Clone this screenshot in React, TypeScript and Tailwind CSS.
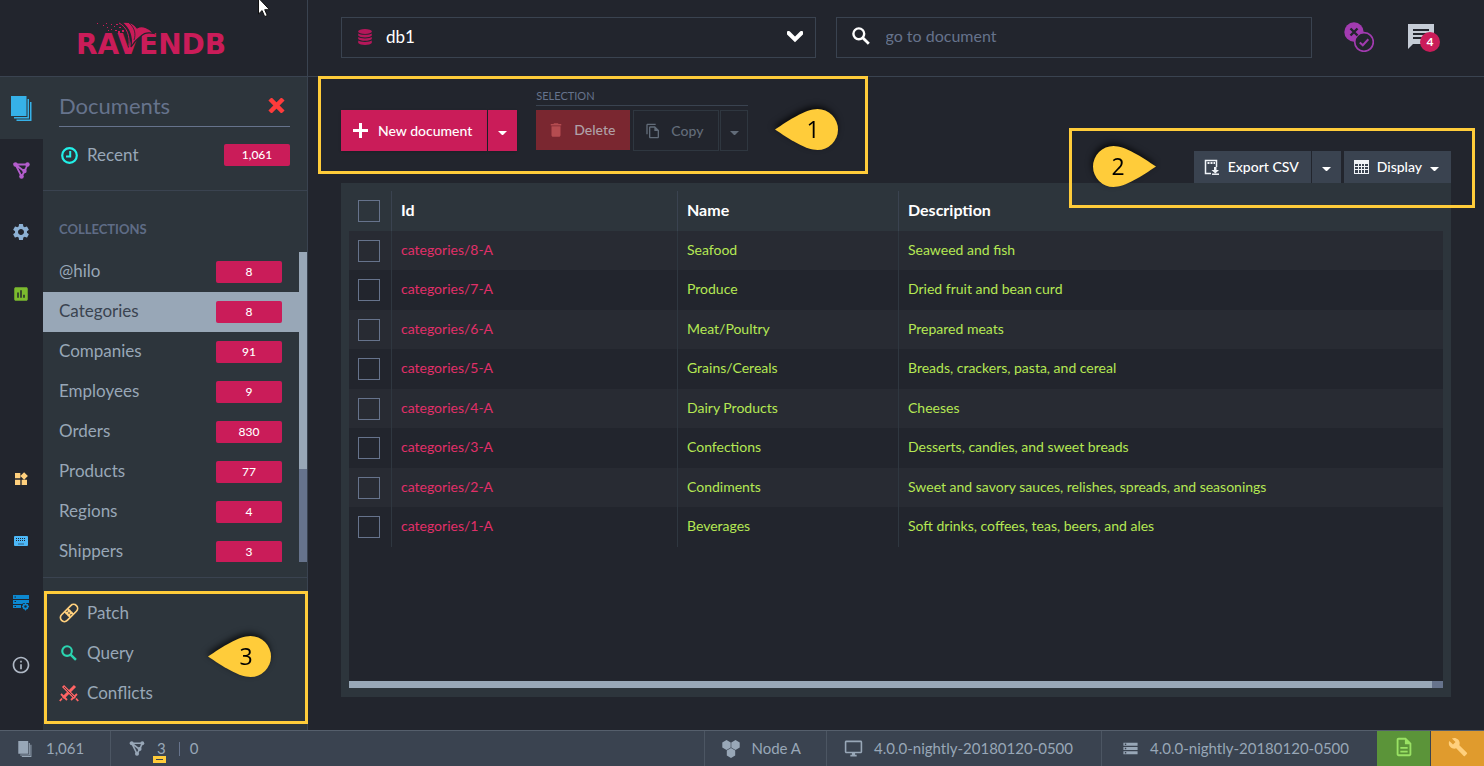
import type { ReactNode } from 'react';
import {
    MdBuild,
    MdDelete,
    MdInfoOutline,
    MdInsertChart,
    MdOutlineDescription,
    MdOutlineDesktopWindows,
    MdOutlineFileCopy,
    MdSettings,
    MdStorage,
    MdWidgets,
} from 'react-icons/md';

interface Collection {
    name: string;
    count: number;
}

interface Category {
    id: string;
    name: string;
    description: string;
}

const collections: Collection[] = [
    { name: '@hilo', count: 8 },
    { name: 'Categories', count: 8 },
    { name: 'Companies', count: 91 },
    { name: 'Employees', count: 9 },
    { name: 'Orders', count: 830 },
    { name: 'Products', count: 77 },
    { name: 'Regions', count: 4 },
    { name: 'Shippers', count: 3 },
];

const categories: Category[] = [
    { id: 'categories/8-A', name: 'Seafood', description: 'Seaweed and fish' },
    { id: 'categories/7-A', name: 'Produce', description: 'Dried fruit and bean curd' },
    { id: 'categories/6-A', name: 'Meat/Poultry', description: 'Prepared meats' },
    { id: 'categories/5-A', name: 'Grains/Cereals', description: 'Breads, crackers, pasta, and cereal' },
    { id: 'categories/4-A', name: 'Dairy Products', description: 'Cheeses' },
    { id: 'categories/3-A', name: 'Confections', description: 'Desserts, candies, and sweet breads' },
    {
        id: 'categories/2-A',
        name: 'Condiments',
        description: 'Sweet and savory sauces, relishes, spreads, and seasonings',
    },
    { id: 'categories/1-A', name: 'Beverages', description: 'Soft drinks, coffees, teas, beers, and ales' },
];

export default function App() {
    return (
        <div className="relative flex h-screen flex-col overflow-hidden bg-[#22252d] font-['Lato',sans-serif] text-[#98a7b7]">
            <Header />
            <div className="flex min-h-0 flex-1">
                <Rail />
                <Sidebar />
                <Documents />
            </div>
            <Footer />
            <svg className="absolute top-0 left-[258px] h-[18px] w-3" viewBox="0 0 12 18">
                <path d="M.5-2V14l3.600-3.400 2.600 6 2.600-1.100L6.700 9.700H11.500Z" fill="#fff" stroke="#111" />
            </svg>
        </div>
    );
}

function Header() {
    return (
        <header className="flex h-[77px] shrink-0 border-b border-[#3a4350]">
            <div className="flex w-[308px] shrink-0 items-center justify-center border-r border-[#3a4350]">
                <Logo />
            </div>
            <div className="flex flex-1 items-center gap-5 pr-[46px] pb-[2px] pl-[33px]">
                <label className="flex h-[41px] flex-1 items-center border border-[#3a4350] pr-3 pb-px pl-4">
                    <DatabaseIcon />
                    <select
                        aria-label="Database"
                        className="ml-[14px] flex-1 appearance-none bg-transparent text-[17px] text-white outline-none"
                    >
                        <option>db1</option>
                    </select>
                    <svg className="h-3 w-4" viewBox="0 0 16 12" fill="none" stroke="#fff" strokeWidth="4">
                        <path d="M1.500 2 8 8.500 14.500 2" strokeLinecap="round" />
                    </svg>
                </label>
                <label className="flex h-[41px] flex-1 items-center border border-[#3a4350] px-[15px] pb-[2px]">
                    <SearchIcon className="h-[18px] w-[18px] text-white" />
                    <input
                        type="text"
                        aria-label="go to document"
                        placeholder="go to document"
                        className="ml-4 flex-1 bg-transparent text-base outline-none placeholder:text-[#66738c]"
                    />
                </label>
                <button type="button" aria-label="Cluster state" className="ml-3">
                    <svg className="h-[30px] w-[30px]" viewBox="0 0 30 30" fill="none">
                        <circle cx="10" cy="10" r="9.700" fill="#a23bb0" />
                        <circle cx="20" cy="20" r="9.300" fill="#22252d" stroke="#a23bb0" strokeWidth="1.700" />
                        <path d="m6.500 6.500 7 7m0-7-7 7" stroke="#22252d" strokeWidth="2.400" />
                        <path d="m15.800 20.500 3 2.800 5.500-6" stroke="#a23bb0" strokeWidth="2" />
                    </svg>
                </button>
                <button type="button" aria-label="Notifications" className="relative ml-3">
                    <svg className="h-[26px] w-8" viewBox="0 0 32 26">
                        <path d="M2 0h26v20H7l-5 5z" fill="#c5ccd6" />
                        <path d="M7 6h16M7 10h16M7 14h16" stroke="#22252d" strokeWidth="2" />
                    </svg>
                    <span className="absolute top-2 left-[14px] flex h-5 w-5 items-center justify-center rounded-full bg-[#ca1c59] text-xs font-bold text-white">
                        4
                    </span>
                </button>
            </div>
        </header>
    );
}

function Logo() {
    return (
        <svg className="h-11 w-[154px]" viewBox="0 -4 154 44" fill="#ca1c59">
            <text x="-1" y="34" fontSize="28" fontWeight="700" fontFamily="DejaVu Sans, sans-serif">
                RAVENDB
            </text>
            <path
                d="M45 2.500C52 1.500 57 4 60 8 65 5 72 7.500 77 13.500 71 12 67 13 64 16 60 19 57 22 54 27 55.500 17 53 9 45 2.500Z"
                stroke="#22252d"
                strokeWidth="1.200"
            />
            <path d="M52 3C58 8 59 14 57 20" fill="none" stroke="#22252d" strokeWidth=".8" />
            <path d="M42 3C50 7 53 16 52 26" fill="none" stroke="#ca1c59" strokeWidth="1" />
            <path d="M20 3h1v1h-1zM26 5h1v1h-1zM30 7h1v1h-1zM34 4h1v1h-1zM34 9h1v1h-1zM37 6h1v1h-1zM38 10h2v1h-2zM41 11h2v2h-2zM42 7h2v1h-2zM45 10h2v2h-2zM29 3h1v1h-1zM39 4h2v1h-2zM31 10h1v1h-1z" />
        </svg>
    );
}

function Rail() {
    return (
        <nav className="flex w-[43px] shrink-0 flex-col pb-[34px]">
            <RailLink label="Documents" active>
                <DocumentsIcon className="h-[25px] w-[21px] text-[#36b1e8]" />
            </RailLink>
            <RailLink label="Indexes">
                <GraphIcon className="h-[17px] w-[17px] text-[#b45dcd]" />
            </RailLink>
            <RailLink label="Settings">
                <MdSettings className="h-5 w-5 text-[#8db1d4]" />
            </RailLink>
            <RailLink label="Stats">
                <MdInsertChart className="h-[18px] w-[18px] text-[#7cbb2e]" />
            </RailLink>
            <div className="flex-1" />
            <RailLink label="Resources">
                <MdWidgets className="h-4 w-4 text-[#ffd07d]" />
            </RailLink>
            <RailLink label="Console">
                <svg className="h-[10px] w-[14px]" viewBox="0 0 14 10">
                    <rect width="14" height="10" rx="1" fill="#4db8f8" />
                    <path d="M2 2.500h10M2 4.500h10" stroke="#22252d" strokeDasharray="1 1" />
                    <path d="M4 8h6" stroke="#22252d" strokeWidth=".6" />
                </svg>
            </RailLink>
            <RailLink label="Manage server">
                <svg className="h-4 w-4" viewBox="0 0 16 16">
                    <path d="M0 0h16v4H0zM0 5h16v3h-5l-2 1H0zM0 10h8v3H0z" fill="#0c88d0" />
                    <path d="M1.500 1.500H3v1H1.500zM1.500 6H3v1H1.500zM1.500 11H3v1H1.500z" fill="#22252d" />
                    <circle cx="12.500" cy="11.500" r="2.200" fill="none" stroke="#0c88d0" strokeWidth="1.800" />
                    <path
                        d="M12.500 8v1m0 5v1.500M9 11.500h1m5 0h1M10 9l.8.8m3.400 3.400.8.800m0-5-.8.8m-3.400 3.400-.8.800"
                        stroke="#0c88d0"
                    />
                </svg>
            </RailLink>
            <RailLink label="About">
                <MdInfoOutline className="h-5 w-5 text-[#b0b9c6]" />
            </RailLink>
        </nav>
    );
}

interface RailLinkProps {
    label: string;
    active?: boolean;
    children: ReactNode;
}

function RailLink({ label, active, children }: RailLinkProps) {
    return (
        <a
            href="#"
            aria-label={label}
            className={
                active
                    ? 'flex h-[62px] items-center justify-center bg-[#2d353c] pr-px'
                    : 'flex h-[62px] items-center justify-center pr-px'
            }
        >
            {children}
        </a>
    );
}

function Sidebar() {
    return (
        <aside className="flex w-[265px] shrink-0 flex-col border-r border-[#3a4350] bg-[#2d353c] text-[17px]">
            <div className="border-b border-[#3a4350] pr-[17px] pb-6 pl-4">
                <div className="flex h-[50px] items-center justify-between border-b border-[#66738c] pt-2 pr-[5px]">
                    <h2 className="text-[22px] text-[#66738c]">Documents</h2>
                    <button type="button" aria-label="Close">
                        <svg className="h-[15px] w-[17px]" viewBox="0 0 17 15" stroke="#fe3b3b" strokeWidth="4.500">
                            <path d="m2 1 13 13m0-13L2 14" />
                        </svg>
                    </button>
                </div>
                <a href="#" className="mt-[17px] flex h-[22px] items-center">
                    <svg className="mr-[9px] ml-[2px] h-[17px] w-[17px]" viewBox="0 0 17 17" fill="none" stroke="#22f0e8">
                        <circle cx="8.500" cy="8.500" r="7.300" strokeWidth="2.200" />
                        <path d="M9.200 4v5.500H5" strokeWidth="2" />
                    </svg>
                    Recent
                    <Badge>1,061</Badge>
                </a>
            </div>
            <h3 className="mt-7 mb-[13px] px-4 text-[13px] leading-5 font-bold text-[#5f6c86]">COLLECTIONS</h3>
            <div className="mb-[15px] flex min-h-0 flex-1">
                <ul className="flex-1 overflow-hidden">
                    {collections.map((collection) => (
                        <li key={collection.name}>
                            <a
                                href="#"
                                className={
                                    collection.name === 'Categories'
                                        ? 'flex h-10 items-center bg-[#98a7b7] pr-[17px] pl-4 text-[#3a4350]'
                                        : 'flex h-10 items-center pr-[17px] pl-4'
                                }
                            >
                                <span className="pb-[3px]">{collection.name}</span>
                                <Badge>{collection.count}</Badge>
                            </a>
                        </li>
                    ))}
                </ul>
                <div className="w-2 bg-[#66738c]">
                    <div className="h-[70%] bg-[#98a7b7]" />
                </div>
            </div>
            <div className="relative border-t border-[#3a4350] px-4 pt-[15px] pb-[17px]">
                <ToolLink label="Patch">
                    <svg className="h-5 w-5" viewBox="0 0 20 20" fill="none" stroke="#ffd07d" strokeWidth="1.700">
                        <rect x="-0.500" y="6" width="21" height="8" rx="4" transform="rotate(-45 10 10)" />
                        <path d="m5.500 8.500 6 6m-3-9 6 6" />
                        <path d="M7.500 9.500h1v1h-1zM9.500 7.500h1v1h-1zM9.500 11.500h1v1h-1zM11.500 9.500h1v1h-1z" />
                    </svg>
                </ToolLink>
                <ToolLink label="Query">
                    <SearchIcon className="mx-[2px] h-4 w-4 text-[#2bd4b0]" />
                </ToolLink>
                <ToolLink label="Conflicts">
                    <svg className="h-5 w-5" viewBox="0 0 20 20" stroke="#ff6464" fill="none">
                        <path d="m4 3 12 12M16 3 4 15" strokeWidth="3" />
                        <path d="m2 11 6 6M18 11l-6 6M3 15.500.8 18m16.200-2.500L19.200 18" strokeWidth="1.800" />
                        <path d="m5 4 10 10" stroke="#2d353c" strokeWidth=".8" />
                    </svg>
                </ToolLink>
                <Highlight className="inset-x-0 top-[13px] bottom-[6px] -mr-px ml-px" />
                <Pin value="3" className="top-[58px] right-9" />
            </div>
        </aside>
    );
}

function ToolLink({ label, children }: { label: string; children: ReactNode }) {
    return (
        <a href="#" className="flex h-10 items-center">
            {children}
            <span className="ml-2 pb-px">{label}</span>
        </a>
    );
}

function Badge({ children }: { children: ReactNode }) {
    return (
        <span className="ml-auto h-[22px] w-[66px] rounded-xs bg-[#ca1c59] text-center text-xs leading-[22px] font-medium text-white">
            {children}
        </span>
    );
}

function Documents() {
    return (
        <main className="relative flex min-w-0 flex-1 flex-col px-[33px] pb-[33px]">
            <div className="flex h-[106px] shrink-0 items-end justify-between text-sm font-medium">
                <div className="flex items-end pb-8">
                    <div className="mr-[19px] flex gap-px text-white">
                        <button type="button" className="flex h-[41px] items-center bg-[#ca1c59] pr-[15px] pl-3 shadow">
                            <svg className="mr-[10px] h-[15px] w-[15px]" viewBox="0 0 15 15" stroke="#fff" strokeWidth="3">
                                <path d="M7.500 0v15M0 7.500h15" />
                            </svg>
                            New document
                        </button>
                        <CaretButton label="More create options" className="h-[41px] w-[29px] bg-[#ca1c59] shadow" />
                    </div>
                    <div>
                        <p className="mb-1 border-b border-[#3a4350] text-[11px] leading-[18px] font-normal text-[#66738c]">
                            SELECTION
                        </p>
                        <div className="flex">
                            <button
                                type="button"
                                className="mr-[3px] flex h-10 w-[94px] items-center gap-[9px] bg-[#7a2730] pl-[11px] text-[#b0a0a7]"
                            >
                                <MdDelete className="h-[18px] w-[18px] text-[#b54c50]" />
                                Delete
                            </button>
                            <button
                                type="button"
                                className="mr-px flex h-[41px] w-[86px] items-center gap-[10px] border border-[#2f3740] pl-[11px] text-[#626c79]"
                            >
                                <MdOutlineFileCopy className="h-4 w-4" />
                                Copy
                            </button>
                            <CaretButton
                                label="More copy options"
                                className="h-[41px] w-7 border border-[#2f3740] text-[#626c79]"
                            />
                        </div>
                    </div>
                </div>
                <div className="flex text-white">
                    <button type="button" className="mr-px flex h-8 items-center gap-2 bg-[#3a4350] pr-3 pl-[10px]">
                        <svg className="h-4 w-4" viewBox="0 0 16 16" fill="none" stroke="#f0f3f7" strokeWidth="1.500">
                            <path d="M12.500 8V1.500h-11v13H7" />
                            <path d="M3.500 4h2m1 0h2m1 0h1.500" strokeWidth="2" />
                            <path d="M10 8h2.500v3h2.500l-3.700 3.500L7.500 11H10z" fill="#f0f3f7" stroke="none" />
                            <path d="M8 15.200h7" />
                        </svg>
                        Export CSV
                    </button>
                    <CaretButton label="More export options" className="mr-[3px] h-8 w-[29px] bg-[#3a4350]" />
                    <button type="button" className="flex h-8 items-center gap-2 bg-[#3a4350] pr-3 pl-[10px]">
                        <svg className="h-[14px] w-[15px]" viewBox="0 0 15 14" fill="#f0f3f7">
                            <path
                                d="M0 0h15v14H0zM1 4v2h3V4zm4 0v2h2V4zm3 0v2h2V4zm3 0v2h3V4zM1 7v2h3V7zm4 0v2h2V7zm3 0v2h2V7zm3 0v2h3V7zM1 10v3h3v-3zm4 0v3h2v-3zm3 0v3h2v-3zm3 0v3h3v-3z"
                                fillRule="evenodd"
                            />
                        </svg>
                        Display
                        <Caret />
                    </button>
                </div>
            </div>
            <div className="flex min-h-0 flex-1 flex-col bg-[#2d353c] p-2">
                <div className="min-h-0 flex-1 overflow-hidden bg-[#22252d]">
                    <CategoriesTable />
                </div>
                <div className="mb-px h-[7px] bg-[#66738c]">
                    <div className="h-full w-[99%] bg-[#98a7b7]" />
                </div>
            </div>
            <Highlight className="-top-px left-[10px] h-[98px] w-[550px]" />
            <Pin value="1" className="top-8 left-[467px]" />
            <Highlight className="top-[51px] right-[9px] h-20 w-[406px]" />
            <Pin value="2" pointsRight className="top-[69px] right-[328px]" />
        </main>
    );
}

function CategoriesTable() {
    return (
        <table className="w-full table-fixed border-separate border-spacing-0 text-left text-sm">
            <thead className="bg-[#2d353c] text-base text-white">
                <tr className="h-10">
                    <th className="w-[43px] border-r border-[#3a4350] pl-[9px]">
                        <Checkbox label="Select all" />
                    </th>
                    <th className="w-[286px] border-r border-[#3a4350] pb-[2px] pl-[9px]">Id</th>
                    <th className="w-[221px] border-r border-[#3a4350] pb-[2px] pl-[9px]">Name</th>
                    <th className="pb-[2px] pl-[9px]">Description</th>
                </tr>
            </thead>
            <tbody className="text-[#b5e853]">
                {categories.map((category) => (
                    <tr key={category.id} className="odd:h-[39px] odd:bg-[#282b33] even:h-10">
                        <td className="border-r border-[#2f3740] pl-[9px]">
                            <Checkbox label={category.id} />
                        </td>
                        <td className="border-r border-[#2f3740] pb-[2px] pl-[9px]">
                            <a href="#" className="text-[#e12f69]">
                                {category.id}
                            </a>
                        </td>
                        <td className="border-r border-[#2f3740] pb-[2px] pl-[9px]">{category.name}</td>
                        <td className="pb-[2px] pl-[9px]">{category.description}</td>
                    </tr>
                ))}
            </tbody>
        </table>
    );
}

function Checkbox({ label }: { label: string }) {
    return (
        <input
            type="checkbox"
            aria-label={label}
            className="block h-[22px] w-[22px] appearance-none border border-[#66738c] checked:bg-[#66738c]"
        />
    );
}

function Caret() {
    return (
        <svg className="mt-1 h-1 w-[9px]" viewBox="0 0 9 4" fill="currentColor">
            <path d="M0 0h9L4.500 4.500Z" />
        </svg>
    );
}

function CaretButton({ label, className }: { label: string; className: string }) {
    return (
        <button type="button" aria-label={label} className={`flex items-center justify-center ${className}`}>
            <Caret />
        </button>
    );
}

function Highlight({ className }: { className: string }) {
    return <div className={`pointer-events-none absolute border-3 border-[#ffcc3a] ${className}`} />;
}

interface PinProps {
    value: string;
    pointsRight?: boolean;
    className: string;
}

function Pin({ value, pointsRight, className }: PinProps) {
    return (
        <svg
            className={`absolute h-[41px] w-[63px] drop-shadow-[-1px_-3px_3px_rgba(0,0,0,0.7)] ${className}`}
            viewBox="0 0 63 41"
        >
            <path
                d={
                    pointsRight
                        ? 'M63 20.500C49 30 32 41 20.500 41a20.500 20.500 0 0 1 0-41C32 0 49 11 63 20.500Z'
                        : 'M0 20.500C14 30 31 41 42.500 41a20.500 20.500 0 0 0 0-41C31 0 14 11 0 20.500Z'
                }
                fill="#ffcc3a"
            />
            <text
                x={pointsRight ? 25 : 38}
                y="29"
                textAnchor="middle"
                fontSize="23"
                fontFamily="Open Sans, sans-serif"
                fill="#000"
            >
                {value}
            </text>
        </svg>
    );
}

function Footer() {
    return (
        <footer className="flex h-9 shrink-0 border-t border-[#555f6c] bg-[#3a4350] text-[15px]">
            <div className="flex w-[111px] items-center gap-[14px] border-r border-[#4c5663] pl-[18px]">
                <DocumentsIcon className="h-4 w-[14px]" />
                1,061
            </div>
            <div className="flex items-center pl-[18px]">
                <GraphIcon className="mr-3 h-[15px] w-4" />
                <span className="relative">
                    3
                    <span className="absolute top-[19px] -left-1 flex h-[7px] w-[13px] items-center justify-center bg-[#ffcc3a]">
                        <span className="h-px w-[7px] bg-[#3a4350]" />
                    </span>
                </span>
                <span className="mr-[10px] ml-[13px] h-[14px] w-px bg-[#66738c]" />
                <span>0</span>
            </div>
            <div className="ml-auto flex items-center gap-[11px] border-l border-[#4c5663] pr-[25px] pl-[17px]">
                <svg className="h-[18px] w-[18px]" viewBox="0 0 18 18" fill="currentColor">
                    <path d="m4.500 0 4.200 2.500v5L4.500 10 .3 7.500v-5zM13.500 0l4.200 2.500v5L13.500 10 9.300 7.500v-5zM9 8l4.200 2.500v5L9 18l-4.200-2.500v-5z" />
                </svg>
                Node A
            </div>
            <div className="flex items-center gap-[11px] border-l border-[#4c5663] pr-7 pl-[17px]">
                <MdOutlineDesktopWindows className="h-[19px] w-[19px]" />
                4.0.0-nightly-20180120-0500
            </div>
            <div className="flex items-center gap-[11px] border-l border-[#4c5663] pr-7 pl-5">
                <MdStorage className="h-[17px] w-[17px]" />
                4.0.0-nightly-20180120-0500
            </div>
            <button
                type="button"
                aria-label="Documentation"
                className="mr-px flex w-[53px] items-center justify-center bg-[#5b9439] pb-1 text-[#9ae264]"
            >
                <MdOutlineDescription className="h-[22px] w-[22px]" />
            </button>
            <button
                type="button"
                aria-label="Tools"
                className="flex w-[53px] items-center justify-center bg-[#e09b2d] pb-1 text-[#ffd07d]"
            >
                <MdBuild className="h-5 w-5" />
            </button>
        </footer>
    );
}

function SearchIcon({ className }: { className: string }) {
    return (
        <svg className={className} viewBox="0 0 18 18" fill="none" stroke="currentColor">
            <circle cx="6.800" cy="6.800" r="5.400" strokeWidth="2.400" />
            <path d="m10.500 10.500 6.300 6.300" strokeWidth="2.800" />
        </svg>
    );
}

function DatabaseIcon() {
    return (
        <svg className="h-4 w-[14px]" viewBox="0 0 14 16" fill="#b5175a">
            <ellipse cx="7" cy="2.500" rx="6.800" ry="2.500" />
            <path d="M.2 4.500C2 6.300 12 6.300 13.800 4.500v2C12 9 2 9 .2 6.500zM.2 8C2 9.900 12 9.900 13.800 8v2C12 12.400 2 12.400 .2 10zM.2 11.500c1.800 1.900 11.800 1.900 13.600 0V14C12 16.500 2 16.500.2 14z" />
        </svg>
    );
}

function DocumentsIcon({ className }: { className: string }) {
    return (
        <svg className={className} viewBox="0 0 21 25" fill="currentColor">
            <path d="M0 0h15.500v20H0zM3 21h13.500V3H18v19.500H3zM5.500 23.500h13.500V6h1.500v19h-15z" />
        </svg>
    );
}

function GraphIcon({ className }: { className: string }) {
    return (
        <svg className={className} viewBox="0 0 17 17" fill="currentColor">
            <path
                d="M2.500 2.500h12L11.500 9.500zM2.500 2.500 8.500 14.500 11.500 9.500"
                fill="none"
                stroke="currentColor"
                strokeWidth="1.800"
            />
            <circle cx="2.500" cy="2.500" r="2.200" />
            <circle cx="14.500" cy="2.500" r="2.200" />
            <circle cx="11.500" cy="9" r="2.200" />
            <circle cx="8.500" cy="14.500" r="2.300" />
        </svg>
    );
}
